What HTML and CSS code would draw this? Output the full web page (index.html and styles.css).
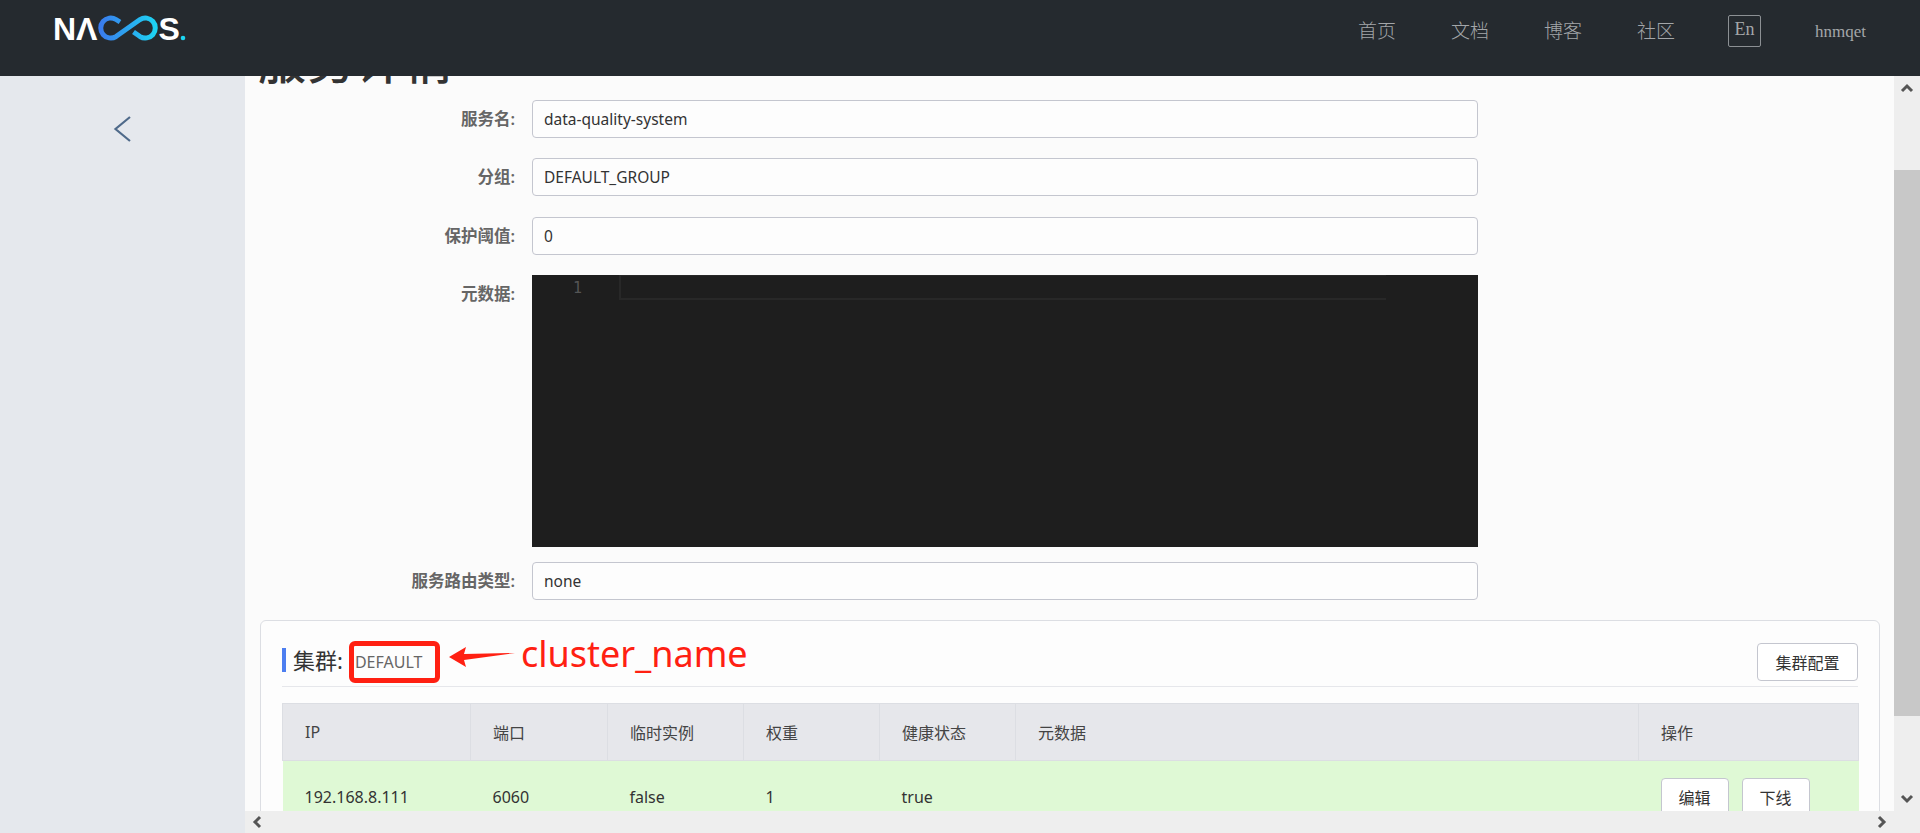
FILE: index.html
```html
<!DOCTYPE html>
<html lang="zh">
<head>
<meta charset="utf-8">
<title>Nacos</title>
<link rel="stylesheet" href="styles.css">
</head>
<body>
<div class="app">
  <header class="topbar">
    <svg class="logo" width="145" height="34" viewBox="50 12 145 34" role="img" aria-label="NACOS.">
      <defs>
        <linearGradient id="inf" x1="98" x2="158" y1="0" y2="0" gradientUnits="userSpaceOnUse">
          <stop offset="0" stop-color="#3b78ee"/>
          <stop offset="1" stop-color="#1cd6f2"/>
        </linearGradient>
      </defs>
      <text class="logo-text" x="53" y="40">N</text>
      <text class="logo-text" x="76" y="40">Λ</text>
      <path d="M120 22 L116 19.500 A10 10 0 1 0 116 36.500 L140 19.500 A10 10 0 1 1 140 36.500 L133.500 32" fill="none" stroke="url(#inf)" stroke-width="5"/>
      <text class="logo-text" x="158.500" y="40">S</text>
      <circle cx="183" cy="38" r="2.300" fill="#1cd6f2"/>
    </svg>
    <nav class="nav">
      <a class="nav-link">首页</a>
      <a class="nav-link">文档</a>
      <a class="nav-link">博客</a>
      <a class="nav-link">社区</a>
      <span class="lang">En</span>
      <span class="user">hnmqet</span>
    </nav>
  </header>

  <aside class="side">
    <svg class="back" width="20" height="28" viewBox="0 0 20 28"><path d="M17 2 L2.500 14 L17 26" fill="none" stroke="#4f6a8a" stroke-width="2.200"/></svg>
  </aside>

  <main class="content">
    <h1 class="title">服务详情</h1>
    <div class="form">
      <div class="row"><label class="lbl">服务名:</label><div class="input">data-quality-system</div></div>
      <div class="row"><label class="lbl">分组:</label><div class="input">DEFAULT_GROUP</div></div>
      <div class="row"><label class="lbl">保护阈值:</label><div class="input">0</div></div>
      <div class="row row-editor"><label class="lbl">元数据:</label>
        <div class="editor">
          <span class="ln">1</span>
          <div class="curline"></div>
        </div>
      </div>
      <div class="row"><label class="lbl">服务路由类型:</label><div class="input">none</div></div>
    </div>

    <section class="card">
      <div class="card-head">
        <h2 class="cluster">集群:</h2>
        <span class="cluster-name">DEFAULT</span>
        <button class="btn btn-config">集群配置</button>
      </div>
      <table class="tbl">
        <colgroup>
          <col class="c1"><col class="c2"><col class="c3"><col class="c4"><col class="c5"><col class="c6"><col class="c7">
        </colgroup>
        <thead>
          <tr><th>IP</th><th>端口</th><th>临时实例</th><th>权重</th><th>健康状态</th><th>元数据</th><th>操作</th></tr>
        </thead>
        <tbody>
          <tr>
            <td>192.168.8.111</td><td>6060</td><td>false</td><td>1</td><td>true</td><td></td>
            <td><div class="ops"><button class="btn btn-op">编辑</button><button class="btn btn-op">下线</button></div></td>
          </tr>
        </tbody>
      </table>

      <div class="note">
        <div class="note-box"></div>
        <svg class="note-arrow" width="68" height="24" viewBox="0 0 68 24"><path d="M0 14 L17 4 L15 11 L66 10 L15 17 L17 24 Z" fill="#ff2012"/></svg>
        <span class="note-text">cluster_name</span>
      </div>
    </section>
  </main>

  <div class="vbar">
    <svg class="arrow" width="14" height="10" viewBox="0 0 14 10"><path d="M2 8 L7 3 L12 8" fill="none" stroke="#555" stroke-width="3"/></svg>
    <div class="vtrack"><div class="vthumb"></div></div>
    <svg class="arrow" width="14" height="10" viewBox="0 0 14 10"><path d="M2 2 L7 7 L12 2" fill="none" stroke="#555" stroke-width="3"/></svg>
  </div>

  <div class="hbar">
    <svg class="arrow" width="10" height="14" viewBox="0 0 10 14"><path d="M8 2 L3 7 L8 12" fill="none" stroke="#555" stroke-width="3"/></svg>
    <svg class="arrow" width="10" height="14" viewBox="0 0 10 14"><path d="M2 2 L7 7 L2 12" fill="none" stroke="#555" stroke-width="3"/></svg>
  </div>
</div>
</body>
</html>
```
FILE: styles.css
```css
* { box-sizing: border-box; }
html, body { margin: 0; height: 100%; overflow: hidden; }
body { font-family: "Noto Sans", "Noto Sans CJK SC", sans-serif; color: #333; background: #fafafa; }

.app {
  display: grid;
  grid-template-columns: 245px 1649px 26px;
  grid-template-rows: 76px 735px 22px;
  height: 833px;
  width: 1920px;
}

.topbar {
  grid-column: 1 / 4;
  background: #252a2f;
  display: flex;
  justify-content: space-between;
  padding: 0 54px 0 50px;
}
.logo { margin-top: 12px; }
.logo-text { font-family: "Liberation Sans", sans-serif; font-weight: 700; font-size: 32px; fill: #fff; }

.nav {
  display: flex;
  align-items: flex-start;
  font-family: "Liberation Serif", "Noto Sans CJK SC", serif;
  color: #a3a6a9;
}
.nav-link { font-size: 19px; line-height: 26px; width: 38px; margin-right: 55px; margin-top: 19px; font-weight: 300; }
.lang {
  width: 33px; height: 32px; margin-top: 15px; margin-left: -2px;
  border: 1px solid #8c9094; border-radius: 2px;
  font-size: 18px; line-height: 26px; text-align: center;
}
.user { font-size: 17px; line-height: 20px; margin-top: 22px; margin-left: 54px; }

.side { grid-row: 2 / 4; background: #e5e8ed; padding: 39px 0 0 113px; }
.back { display: block; }

.content { overflow: hidden; background: #fbfbfb; padding: 0 14px 0 15px; }
.title { margin: -85px 0 0 -2px; height: 109px; font-size: 48px; line-height: 66px; padding-top: 37px; font-weight: 500; letter-spacing: 1px; color: #333; }

.form { display: flex; flex-direction: column; }
.row { display: flex; align-items: flex-start; margin-bottom: 20.400px; }
.row-editor { margin-bottom: 15px; }
.lbl { width: 255px; margin-right: 17px; text-align: right; font-size: 16.500px; line-height: 38px; font-weight: 600; color: #666; flex: none; }
.input {
  width: 946px; height: 38px; padding: 0 11px;
  background: #fdfdfd; border: 1px solid #c4c6cf; border-radius: 4px;
  font-size: 15.500px; line-height: 36px; color: #333;
}
.editor { position: relative; width: 946px; height: 272px; background: #1e1e1e; }
.ln { position: absolute; left: 41px; top: 1px; font-family: "DejaVu Sans Mono", monospace; font-size: 15px; line-height: 24px; color: #555; }
.curline { position: absolute; left: 87px; top: 0; width: 767px; height: 25px; border: solid #282828; border-width: 1px 0 2px 2px; }

.card {
  position: relative;
  margin-top: -1px;
  padding: 22px 21px 0;
  background: #fdfdfd;
  border: 1px solid #dcdee3;
  border-radius: 6px 6px 0 0;
  height: 220px;
}
.card-head {
  display: flex; align-items: center; height: 44px;
  border-bottom: 1px solid #e6e7eb;
  padding-bottom: 5px;
  margin-bottom: 16px;
}
.cluster {
  margin: 0 0 4px; font-size: 22px; line-height: 24px; font-weight: 400; color: #333;
  border-left: 4px solid #4d7ef0; padding-left: 7px;
}
.cluster-name { margin-left: 12px; font-size: 16px; line-height: 24px; color: #666; }
.btn {
  font-family: inherit; font-size: 16px; color: #333;
  background: #fff; border: 1px solid #c4c6cf; border-radius: 4px; padding: 0; height: 38px;
}
.btn-config { margin-left: auto; width: 101px; }

.tbl { table-layout: fixed; width: 1576px; border-collapse: collapse; }
.c1 { width: 188px; } .c2 { width: 137px; } .c3 { width: 136px; } .c4 { width: 136px; }
.c5 { width: 136px; } .c6 { width: 623px; } .c7 { width: 220px; }
.tbl th, .tbl td { text-align: left; padding: 0 22px; font-size: 16px; font-weight: 400; color: #333; }
.tbl th { height: 57px; background: #e6e7eb; border: 1px solid #dcdee3; color: #444; }
.tbl td { height: 74px; background: #dff9d5; }
.ops { display: flex; gap: 13px; }
.btn-op { width: 68px; }

.note { position: absolute; left: 0; top: 0; }
.note-box { position: absolute; left: 88px; top: 20px; width: 91px; height: 42px; border: 5px solid #ff2012; border-radius: 6px; }
.note-arrow { position: absolute; left: 188px; top: 22px; }
.note-text { position: absolute; left: 260px; top: 8px; font-size: 36px; line-height: 50px; color: #ff2012; white-space: nowrap; }

.vbar { background: #eeeeee; display: flex; flex-direction: column; align-items: center; padding: 7px 0; }
.vtrack { flex: 1; width: 100%; padding-top: 77px; }
.vthumb { height: 546px; background: #c8c8c8; }
.arrow { display: block; flex: none; }

.hbar { grid-column: 2 / 4; background: #eeeeee; display: flex; justify-content: space-between; align-items: center; padding: 0 33px 0 7px; }
```
